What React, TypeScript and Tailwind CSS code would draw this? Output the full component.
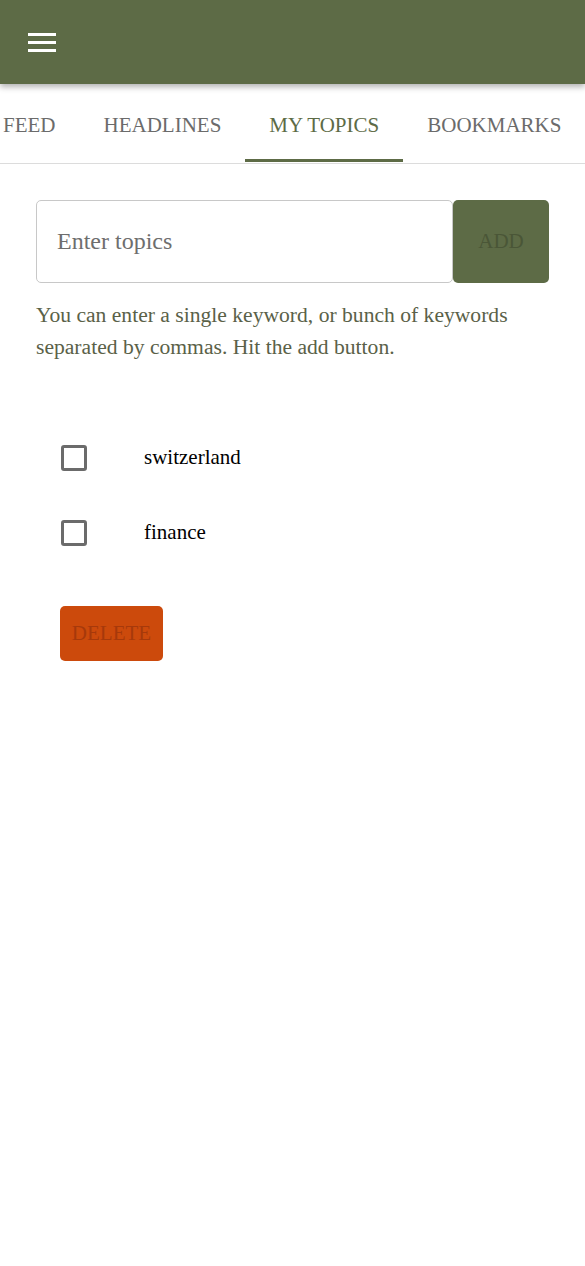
import React, { useState } from 'react';

const tabs = ['FEED', 'HEADLINES', 'MY TOPICS', 'BOOKMARKS'];

const App: React.FC = () => {
  const [topics] = useState<string[]>(['switzerland', 'finance']);
  const [checked, setChecked] = useState<Record<string, boolean>>({});

  return (
    <div className="min-h-[1266px] w-[585px] bg-white overflow-hidden" style={{ fontFamily: '"Liberation Serif", "Times New Roman", serif' }}>
      {/* Top bar */}
      <header className="h-[84px] bg-[#5d6b46] flex items-center pl-[28px] shadow-[0_3px_6px_rgba(0,0,0,0.3)] relative z-10">
        <button className="flex flex-col gap-[5px] w-[28px]" aria-label="menu">
          <span className="block h-[3px] w-[28px] bg-white" />
          <span className="block h-[3px] w-[28px] bg-white" />
          <span className="block h-[3px] w-[28px] bg-white" />
        </button>
      </header>

      {/* Tabs */}
      <nav className="h-[80px] border-b border-[#dcdcdc] overflow-hidden">
        <div className="flex h-full -ml-[21px] pt-[5px]">
          {tabs.map(t => (
            <div
              key={t}
              className={`relative flex items-center px-[24px] text-[21px] shrink-0 ${
                t === 'MY TOPICS' ? 'text-[#5d6b46]' : 'text-[#6b6b6b]'
              }`}
            >
              {t}
              {t === 'MY TOPICS' && (
                <span className="absolute left-0 right-0 bottom-[1px] h-[3px] bg-[#5d6b46]" />
              )}
            </div>
          ))}
        </div>
      </nav>

      <main className="px-[36px] pt-[36px]">
        <div className="flex">
          <input
            placeholder="Enter topics"
            className="w-[417px] h-[83px] border border-[#c8c8c8] rounded-[5px] px-[20px] text-[24px] text-[#333] placeholder:text-[#6e6e6e] outline-none"
          />
          <button className="w-[96px] h-[83px] bg-[#5d6b46] rounded-[5px] text-[21px] text-[#4a5637]">
            ADD
          </button>
        </div>
        <p className="mt-[16px] text-[21.6px] leading-[32px] text-[#5a6148]">
          You can enter a single keyword, or bunch of keywords separated by commas. Hit the add button.
        </p>

        <ul className="mt-[82px] flex flex-col gap-[49px] pl-[25px]">
          {topics.map(t => (
            <li key={t} className="flex items-center h-[26px]">
              <button
                onClick={() => setChecked({ ...checked, [t]: !checked[t] })}
                className="w-[26px] h-[26px] border-[3px] border-[#6b6b6b] rounded-[3px]"
              />
              <span className="ml-[57px] text-[21px] text-black">{t}</span>
            </li>
          ))}
        </ul>

        <button className="mt-[60px] ml-[24px] w-[103px] h-[55px] bg-[#cc4a0c] rounded-[5px] text-[21px] text-[#a6390b]">
          DELETE
        </button>
      </main>
    </div>
  );
};

export default App;
